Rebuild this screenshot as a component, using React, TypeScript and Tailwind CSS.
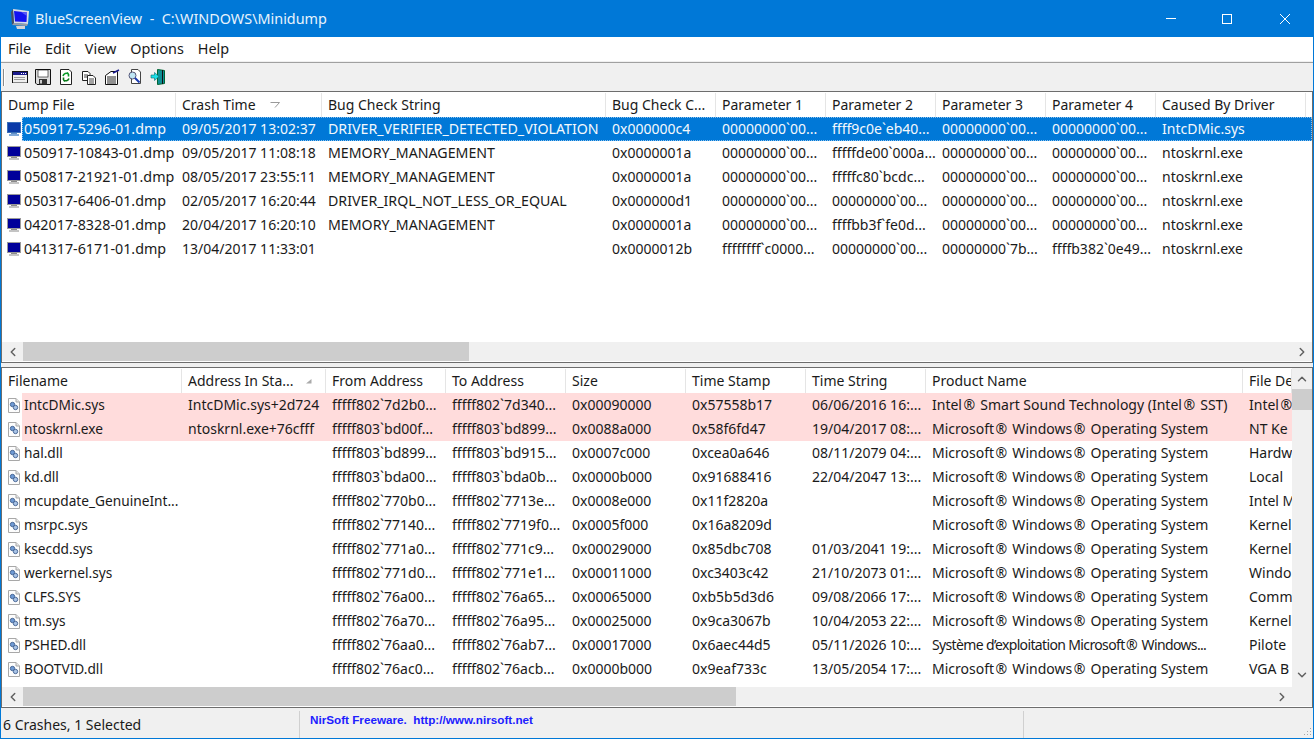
import { Fragment } from "react";
import { ChevronLeft, ChevronRight, ChevronUp, ChevronDown } from "lucide-react";

const topCols = [
  { name: "Dump File", w: 174 },
  { name: "Crash Time", w: 146 },
  { name: "Bug Check String", w: 284 },
  { name: "Bug Check C...", w: 110 },
  { name: "Parameter 1", w: 110 },
  { name: "Parameter 2", w: 110 },
  { name: "Parameter 3", w: 110 },
  { name: "Parameter 4", w: 110 },
  { name: "Caused By Driver", w: 150 },
];

const topRows = [
  ["050917-5296-01.dmp", "09/05/2017 13:02:37", "DRIVER_VERIFIER_DETECTED_VIOLATION", "0x000000c4", "00000000`00...", "ffff9c0e`eb40...", "00000000`00...", "00000000`00...", "IntcDMic.sys"],
  ["050917-10843-01.dmp", "09/05/2017 11:08:18", "MEMORY_MANAGEMENT", "0x0000001a", "00000000`00...", "fffffde00`000a...", "00000000`00...", "00000000`00...", "ntoskrnl.exe"],
  ["050817-21921-01.dmp", "08/05/2017 23:55:11", "MEMORY_MANAGEMENT", "0x0000001a", "00000000`00...", "fffffc80`bcdc...", "00000000`00...", "00000000`00...", "ntoskrnl.exe"],
  ["050317-6406-01.dmp", "02/05/2017 16:20:44", "DRIVER_IRQL_NOT_LESS_OR_EQUAL", "0x000000d1", "00000000`00...", "00000000`00...", "00000000`00...", "00000000`00...", "ntoskrnl.exe"],
  ["042017-8328-01.dmp", "20/04/2017 16:20:10", "MEMORY_MANAGEMENT", "0x0000001a", "00000000`00...", "ffffbb3f`fe0d...", "00000000`00...", "00000000`00...", "ntoskrnl.exe"],
  ["041317-6171-01.dmp", "13/04/2017 11:33:01", "", "0x0000012b", "ffffffff`c0000...", "00000000`00...", "00000000`7b...", "ffffb382`0e49...", "ntoskrnl.exe"],
];

const bottomCols = [
  { name: "Filename", w: 180 },
  { name: "Address In Sta...", w: 144 },
  { name: "From Address", w: 120 },
  { name: "To Address", w: 120 },
  { name: "Size", w: 120 },
  { name: "Time Stamp", w: 120 },
  { name: "Time String", w: 120 },
  { name: "Product Name", w: 317 },
  { name: "File De", w: 49 },
];

const msWin = "Microsoft® Windows® Operating System";

const bottomRows = [
  ["IntcDMic.sys", "IntcDMic.sys+2d724", "fffff802`7d2b0...", "fffff802`7d340...", "0x00090000", "0x57558b17", "06/06/2016 16:...", "Intel® Smart Sound Technology (Intel® SST)", "Intel®"],
  ["ntoskrnl.exe", "ntoskrnl.exe+76cfff", "fffff803`bd00f...", "fffff803`bd899...", "0x0088a000", "0x58f6fd47", "19/04/2017 08:...", msWin, "NT Ke"],
  ["hal.dll", "", "fffff803`bd899...", "fffff803`bd915...", "0x0007c000", "0xcea0a646", "08/11/2079 04:...", msWin, "Hardw"],
  ["kd.dll", "", "fffff803`bda00...", "fffff803`bda0b...", "0x0000b000", "0x91688416", "22/04/2047 13:...", msWin, "Local"],
  ["mcupdate_GenuineInt...", "", "fffff802`770b0...", "fffff802`7713e...", "0x0008e000", "0x11f2820a", "", msWin, "Intel M"],
  ["msrpc.sys", "", "fffff802`77140...", "fffff802`7719f0...", "0x0005f000", "0x16a8209d", "", msWin, "Kernel"],
  ["ksecdd.sys", "", "fffff802`771a0...", "fffff802`771c9...", "0x00029000", "0x85dbc708", "01/03/2041 19:...", msWin, "Kernel"],
  ["werkernel.sys", "", "fffff802`771d0...", "fffff802`771e1...", "0x00011000", "0xc3403c42", "21/10/2073 01:...", msWin, "Windo"],
  ["CLFS.SYS", "", "fffff802`76a00...", "fffff802`76a65...", "0x00065000", "0xb5b5d3d6", "09/08/2066 17:...", msWin, "Comm"],
  ["tm.sys", "", "fffff802`76a70...", "fffff802`76a95...", "0x00025000", "0x9ca3067b", "10/04/2053 22:...", msWin, "Kernel"],
  ["PSHED.dll", "", "fffff802`76aa0...", "fffff802`76ab7...", "0x00017000", "0x6aec44d5", "05/11/2026 10:...", "Système d’exploitation Microsoft® Windows...", "Pilote"],
  ["BOOTVID.dll", "", "fffff802`76ac0...", "fffff802`76acb...", "0x0000b000", "0x9eaf733c", "13/05/2054 17:...", msWin, "VGA B"],
];

function AppIcon() {
  return (
    <svg width="20" height="22" viewBox="0 0 20 22" className="shrink-0">
      <path d="M3 1 L19 3 L18 16 L4 15 Z" fill="#d8dbe6" />
      <path d="M4 3 L17 4.5 L16.5 14 L5 13.5 Z" fill="#1212f0" />
      <path d="M11 4 L17 4.5 L16.8 8 Z" fill="#5a5af5" />
      <path d="M1 4 L3 1 L4 15 L2 17 Z" fill="#4a4f60" />
      <path d="M2 17 L4 15 L18 16 L17 18 Z" fill="#9a9ca6" />
      <path d="M6 18 L15 18 L15 21 L7 21 Z" fill="#d4d4d8" />
    </svg>
  );
}

function MonitorIcon({ selected }: { selected?: boolean }) {
  return (
    <svg width="16" height="16" viewBox="0 0 16 16" className="shrink-0">
      <rect x="1.5" y="1.5" width="13" height="10" fill={selected ? "#0a3aa8" : "#00009a"} stroke={selected ? "#3a6fb8" : "#9a9a9a"} />
      <rect x="5" y="12" width="6" height="1" fill={selected ? "#5f8fc8" : "#8a8a8a"} />
      <rect x="3" y="13" width="10" height="2" fill={selected ? "#7fa8d8" : "#c4c4c4"} />
    </svg>
  );
}

function FileIcon() {
  return (
    <svg width="16" height="16" viewBox="0 0 16 16" className="shrink-0">
      <path d="M2.5 1.5 H10 L13.5 5 V15.5 H2.5 Z" fill="#fdfdfd" stroke="#a8a8a8" />
      <path d="M10 1.5 V5 H13.5" fill="#e6e6e6" stroke="#a8a8a8" />
      <circle cx="6.5" cy="7.5" r="2.2" fill="#6f9ad4" stroke="#3f5f8e" strokeWidth="0.9" />
      <circle cx="9.5" cy="10.5" r="2.2" fill="#a8c3e6" stroke="#3f5f8e" strokeWidth="0.9" />
    </svg>
  );
}

function ToolbarIcons() {
  return (
    <div className="flex items-center gap-[7px]">
      {/* properties window */}
      <svg width="16" height="16" viewBox="0 0 16 16">
        <rect x="0.5" y="2.5" width="15" height="11" fill="#eee" stroke="#111" />
        <rect x="1" y="3" width="14" height="3" fill="#1a1a8c" />
        <path d="M9 4.5 H10 M11 4.5 H12 M13 4.5 H14" stroke="#fff" />
        <rect x="2" y="8" width="11" height="1" fill="#999" />
        <rect x="2" y="10" width="11" height="1" fill="#999" />
        <rect x="1" y="13" width="14" height="1" fill="#888" />
      </svg>
      {/* save */}
      <svg width="16" height="16" viewBox="0 0 16 16">
        <path d="M0.5 0.5 H15.5 V15.5 H2 L0.5 14 Z" fill="#ddd" stroke="#111" />
        <rect x="3" y="1" width="10" height="7" fill="#fff" stroke="#111" strokeWidth="0.6" />
        <rect x="4" y="10" width="8" height="5.5" fill="#333" />
        <rect x="5" y="11" width="2" height="3.5" fill="#ccc" />
      </svg>
      {/* refresh */}
      <svg width="16" height="16" viewBox="0 0 16 16">
        <path d="M2.5 0.5 H11 L13.5 3 V15.5 H2.5 Z" fill="#fff" stroke="#222" />
        <path d="M5 7 A3.5 3.5 0 0 1 10.5 5 L9 3.5 M10.5 5 L10.5 7.5" fill="none" stroke="#0a9a2a" strokeWidth="1.6" />
        <path d="M11 9.5 A3.5 3.5 0 0 1 5.5 11 L7 12.5 M5.5 11 L5.5 8.5" fill="none" stroke="#0a7a1a" strokeWidth="1.6" />
      </svg>
      {/* copy */}
      <svg width="16" height="16" viewBox="0 0 16 16">
        <path d="M1.5 2.5 H7 L9 4.5 V11.5 H1.5 Z" fill="#fff" stroke="#222" />
        <path d="M6.5 6.5 H12 L14.5 9 V15.5 H6.5 Z" fill="#fff" stroke="#222" />
        <path d="M3 6 H7 M3 8 H6 M8 10 H13 M8 12 H13 M8 14 H13" stroke="#444" />
      </svg>
      {/* html report */}
      <svg width="16" height="16" viewBox="0 0 16 16">
        <path d="M1.5 6.5 L7 2.5 H13.5 V15.5 H1.5 Z" fill="#fff" stroke="#111" />
        <path d="M3 8 H12 M3 10 H12 M3 12 H12 M3 14 H12" stroke="#222" />
        <path d="M9 4 L15 1" stroke="#1a1a8c" strokeWidth="1.6" />
      </svg>
      {/* find */}
      <svg width="16" height="16" viewBox="0 0 16 16">
        <path d="M4.5 0.5 H11 L13.5 3 V14.5 H4.5 Z" fill="#fff" stroke="#444" />
        <circle cx="5.5" cy="6.5" r="3.5" fill="#bfe6f5" stroke="#557" />
        <path d="M8 9 L12.5 13.5" stroke="#1a3ab0" strokeWidth="2" />
      </svg>
      {/* exit */}
      <svg width="16" height="16" viewBox="0 0 16 16">
        <path d="M7.5 0.5 L14.5 1.5 V14.5 L7.5 15.5 Z" fill="#0d8f95" stroke="#063" />
        <rect x="12" y="1" width="1" height="14" fill="#111" />
        <path d="M1 6 H4.5 V3.5 L9 7.5 L4.5 11.5 V9 H1 Z" fill="#18e0e8" stroke="#0a6a70" strokeWidth="0.6" />
      </svg>
    </div>
  );
}

// the ® runs wider in the original font, so give it a little room
function CellText({ text }: { text: string }) {
  const parts = text.split("®");
  return (
    <>
      {parts.map((p, i) => (
        <Fragment key={i}>
          {p}
          {i < parts.length - 1 && <span className="mx-[1.5px]">®</span>}
        </Fragment>
      ))}
    </>
  );
}

function Header({ cols, sort }: { cols: { name: string; w: number }[]; sort: string }) {
  return (
    <div className="flex h-6 shrink-0 bg-white">
      {cols.map((c) => (
        <div
          key={c.name}
          style={{ width: c.w }}
          className="flex shrink-0 items-center justify-between overflow-hidden border-r border-[#e5e5e5] pl-[6px] pr-3 whitespace-nowrap text-[#1a1a1a]"
        >
          <span>{c.name}</span>
          {c.name === sort && sort === "Crash Time" && (
            <svg width="10" height="6" viewBox="0 0 10 6" className="mr-[29px]">
              <path d="M0.5 0.5 H9.5 L5 5.5" fill="none" stroke="#999" />
            </svg>
          )}
          {c.name === sort && sort !== "Crash Time" && (
            <svg width="6" height="5" viewBox="0 0 6 5" className="mr-px">
              <path d="M0 4.5 H5.5 V0 Z" fill="#aaa" />
            </svg>
          )}
        </div>
      ))}
    </div>
  );
}

function HScroll({ thumb, rightPad }: { thumb: number; rightPad: number }) {
  return (
    <div className="flex h-[19px] shrink-0 items-center bg-[#f0f0f0]">
      <div className="flex w-[21px] shrink-0 justify-center text-[#606060]">
        <ChevronLeft size={14} strokeWidth={2.5} />
      </div>
      <div className="h-full shrink-0 bg-[#cdcdcd]" style={{ width: thumb }} />
      <div className="flex-1" />
      <div className="flex w-[21px] shrink-0 justify-center text-[#606060]" style={{ marginRight: rightPad }}>
        <ChevronRight size={14} strokeWidth={2.5} />
      </div>
    </div>
  );
}

export default function App() {
  return (
    <div className="flex h-[739px] w-[1314px] flex-col overflow-hidden border-x border-b border-[#0078d7] bg-[#f0f0f0] font-['Noto_Sans',sans-serif] text-[14px] leading-none text-[#1a1a1a]">
      {/* title bar */}
      <div className="-mx-px flex h-[37px] shrink-0 items-center bg-[#0078d7] pl-[10px] text-[#e8f3fc]">
        <AppIcon />
        <span className="ml-[5px] pt-px text-[14.4px] whitespace-pre">BlueScreenView  -  C:\WINDOWS\Minidump</span>
        <div className="ml-auto flex h-full items-center pr-[6px] text-white">
          <div className="flex w-[46px] justify-center">
            <div className="h-px w-[10px] bg-white" />
          </div>
          <div className="ml-[10px] flex w-[46px] justify-center">
            <div className="h-[10px] w-[10px] border border-white" />
          </div>
          <div className="ml-[12px] flex w-[46px] justify-center">
            <svg width="10" height="10" viewBox="0 0 10 10">
              <path d="M0 0 L10 10 M10 0 L0 10" stroke="white" strokeWidth="1" />
            </svg>
          </div>
        </div>
      </div>

      {/* menu */}
      <div className="flex h-[25px] shrink-0 items-center gap-[14px] border-b border-[#f0f0f0] bg-white pt-px pl-[7px] text-[14.4px]">
        <span>File</span>
        <span>Edit</span>
        <span>View</span>
        <span>Options</span>
        <span>Help</span>
      </div>

      {/* toolbar */}
      <div className="flex h-[29px] shrink-0 items-center border-t border-[#a0a0a0] pl-[2px]">
        <div className="mr-[7px] h-[17px] w-[2px] border-x border-x-[#8a8a8a] border-r-[#fff]" />
        <ToolbarIcons />
      </div>

      {/* crashes list */}
      <div className="flex h-[272px] shrink-0 flex-col border border-[#6d6d6d] bg-white">
        <div className="h-px shrink-0" />
        <Header cols={topCols} sort="Crash Time" />
        <div className="min-h-0 flex-1 overflow-hidden">
          {topRows.map((row, i) => (
            <div key={row[0]} className="flex h-6 items-center">
              <div className="flex h-full w-5 shrink-0 items-center pl-[4px]">
                <MonitorIcon selected={i === 0} />
              </div>
              <div
                className={`flex h-full flex-1 items-center ${
                  i === 0 ? "bg-[#0078d7] text-[#f4f9fd] outline-1 -outline-offset-1 outline-dotted outline-[#8cc2ee]" : ""
                }`}
              >
                {row.map((cell, j) => (
                  <div
                    key={j}
                    style={{ width: j === 0 ? topCols[0].w - 20 : topCols[j].w }}
                    className={`flex h-full shrink-0 items-center whitespace-nowrap ${
                      j === 0 ? "pl-[2px] text-[14.3px]" : "pl-[6px]"
                    } ${j === 2 ? "text-[14.2px]" : ""}`}
                  >
                    {cell}
                  </div>
                ))}
              </div>
            </div>
          ))}
        </div>
        <HScroll thumb={446} rightPad={0} />
        <div className="h-px shrink-0" />
      </div>

      {/* splitter */}
      <div className="h-[4px] shrink-0" />

      {/* modules list */}
      <div className="flex h-[341px] shrink-0 flex-col border border-[#6d6d6d] bg-white">
        <div className="flex min-h-0 flex-1">
          <div className="min-w-0 flex-1 overflow-hidden">
            <div className="h-px" />
            <Header cols={bottomCols} sort="Address In Sta..." />
            {bottomRows.map((row, i) => (
              <div key={row[0]} className="flex h-6 items-center">
                <div className="flex h-full w-5 shrink-0 items-center pl-[4px]">
                  <FileIcon />
                </div>
                <div className={`flex h-full flex-1 items-center ${i < 2 ? "bg-[#ffdcdc]" : ""}`}>
                  {row.map((cell, j) => (
                    <div
                      key={j}
                      style={{ width: j === 0 ? bottomCols[0].w - 20 : bottomCols[j].w }}
                      className={`flex h-full shrink-0 items-center overflow-hidden whitespace-pre ${
                        j === 0 ? "pl-[2px] text-[13.7px]" : "pl-[6px]"
                      } ${cell.startsWith("Système") ? "tracking-[-0.64px]" : ""}`}
                    >
                      <CellText text={cell} />
                    </div>
                  ))}
                </div>
              </div>
            ))}
          </div>
          <div className="flex w-5 shrink-0 flex-col bg-[#f0f0f0] text-[#606060]">
            <div className="flex h-[21px] items-center justify-center">
              <ChevronUp size={14} strokeWidth={2.5} />
            </div>
            <div className="h-[21px] bg-[#cdcdcd]" />
            <div className="flex-1" />
            <div className="flex h-6 items-center justify-center">
              <ChevronDown size={14} strokeWidth={2.5} />
            </div>
          </div>
        </div>
        <HScroll thumb={713} rightPad={20} />
        <div className="h-px shrink-0" />
      </div>

      {/* status bar */}
      <div className="flex min-h-0 flex-1 pt-[3px]">
        <div className="flex h-full w-[298px] shrink-0 items-center pl-[2px]">6 Crashes, 1 Selected</div>
        <div className="h-full w-[724px] shrink-0 border-l border-[#d0d0d0] pt-[3px] pl-[10px] font-['Liberation_Sans',sans-serif] text-[11.7px] font-bold whitespace-pre text-[#2020ff]">
          NirSoft Freeware.  http://www.nirsoft.net
        </div>
        <div className="relative h-full flex-1 border-l border-[#d0d0d0]">
          {/* size grip */}
          <svg width="10" height="10" viewBox="0 0 10 10" className="absolute right-px bottom-px">
            <path d="M8 1 h1 v1 h-1 Z M5 4 h1 v1 h-1 Z M8 4 h1 v1 h-1 Z M2 7 h1 v1 h-1 Z M5 7 h1 v1 h-1 Z M8 7 h1 v1 h-1 Z" fill="#a8a8a8" />
          </svg>
        </div>
      </div>
    </div>
  );
}
